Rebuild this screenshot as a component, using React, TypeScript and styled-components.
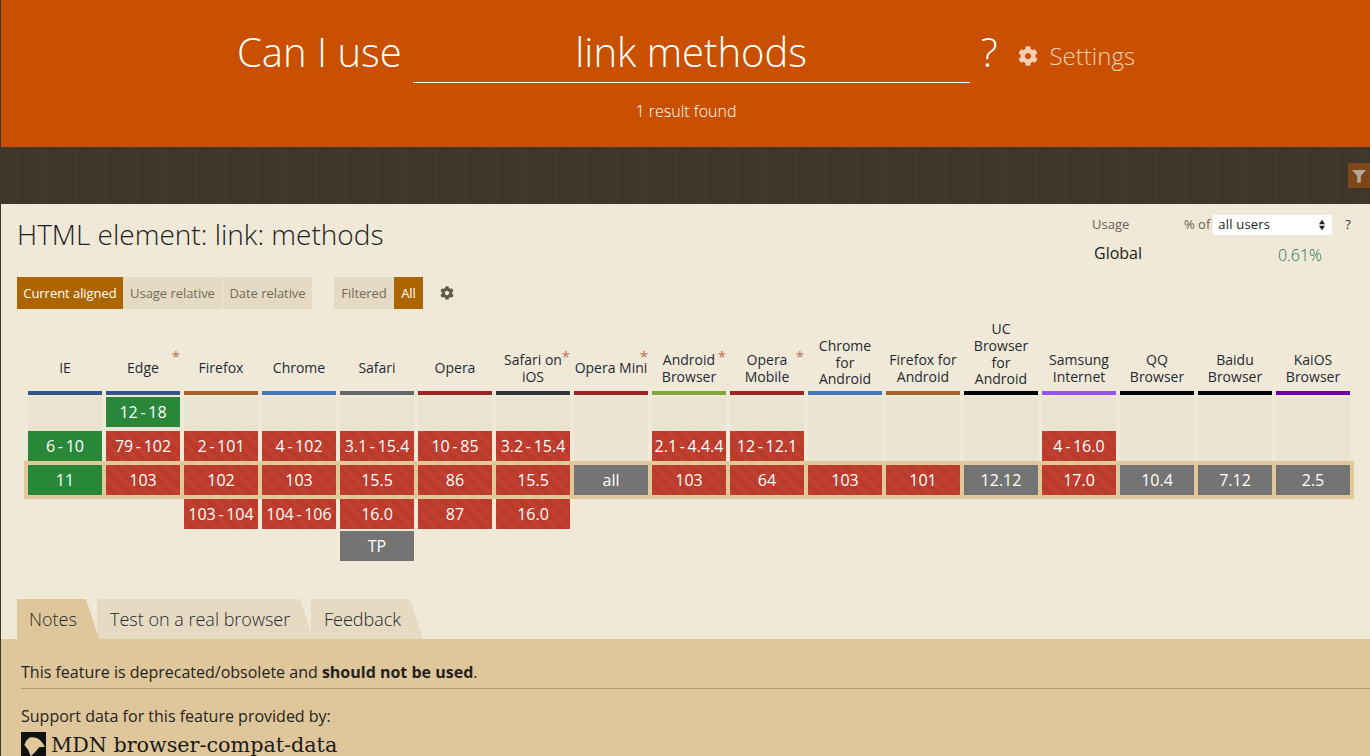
import styled, { createGlobalStyle } from 'styled-components';
import { FaCog } from 'react-icons/fa';

const GlobalStyle = createGlobalStyle`
  html, body {
    margin: 0;
    height: 100%;
    overflow: hidden;
    background: #3f3729;
  }
  body {
    font-family: "Open Sans", "Liberation Sans", sans-serif;
    color: #1f1a12;
  }
`;

const Page = styled.div`
  height: 756px;
  overflow: hidden;
  padding-left: 1px;
  background: #3f3729;
`;

const Header = styled.header`
  height: 147px;
  padding-left: 1px;
  box-sizing: border-box;
  background: #c85000;
  color: #fff;
  display: flex;
  flex-direction: column;
  align-items: center;
`;

const SearchRow = styled.div`
  display: flex;
  align-items: flex-start;
  height: 83px;
  padding-top: 26px;
  box-sizing: border-box;
  font-weight: 300;
  font-size: 40px;
  line-height: 52px;
`;

const SearchLabel = styled.span`
  margin-right: 11px;
`;

const SearchField = styled.div`
  width: 557px;
  height: 56px;
  border-bottom: 1px solid #fff;
  text-align: center;
`;

const Question = styled.span`
  margin-left: 11px;
  margin-right: 21px;
`;

const SettingsLink = styled.span`
  display: flex;
  align-items: center;
  gap: 11px;
  height: 60px;
  font-size: 24px;
  color: #f3cfb4;
`;

const ResultCount = styled.div`
  margin-top: 16px;
  font-size: 16px;
  font-weight: 300;
  line-height: 24px;
`;

const Band = styled.div`
  height: 57px;
  display: flex;
  justify-content: flex-end;
  align-items: flex-start;
  background: repeating-linear-gradient(90deg, #3f3729 0 14px, #41392b 14px 17px, #3e3628 17px 30px);
`;

const FilterButton = styled.div`
  width: 22px;
  height: 25px;
  margin-top: 16px;
  display: flex;
  align-items: center;
  justify-content: center;
  background: #7e4619;
  color: #b0a89c;
`;

const Main = styled.main`
  height: 435px;
  box-sizing: border-box;
  padding: 0 0 0 16px;
  background: #f1e9d8;
  display: flex;
  flex-direction: column;
`;

const TitleRow = styled.div`
  display: flex;
  justify-content: space-between;
  height: 73px;
`;

const Title = styled.h1`
  margin: 10px 0 0;
  font-size: 28px;
  font-weight: 300;
  line-height: 40px;
  color: #1d2227;
`;

const UsagePanel = styled.div`
  width: 265px;
  margin-top: 11px;
  margin-right: 13px;
  font-size: 13px;
`;

const UsageTop = styled.div`
  display: flex;
  align-items: flex-start;
  height: 20px;
  line-height: 18px;
  color: #66604f;
`;

const UsageLabel = styled.span`
  width: 92px;
`;

const OfLabel = styled.span`
  margin-right: 3px;
`;

const UserSelect = styled.div`
  width: 119px;
  height: 20px;
  padding: 0 5px 2px;
  box-sizing: border-box;
  display: flex;
  justify-content: space-between;
  align-items: center;
  background: #fff;
  color: #222;
  letter-spacing: 0.2px;
`;

const Spinner = styled.svg`
  width: 6px;
  height: 12px;
  margin-right: 2px;
  margin-top: 2px;
`;

const UsageHelp = styled.span`
  margin-left: 13px;
  color: #333;
`;

const UsageBottom = styled.div`
  display: flex;
  justify-content: space-between;
  padding: 6px 35px 0 2px;
  font-size: 16px;
  line-height: 24px;
`;

const Percent = styled.span`
  margin-top: 2px;
  font-weight: 300;
  color: #17744a;
`;

const Toolbar = styled.div`
  display: flex;
  align-items: center;
  height: 32px;
  font-size: 13px;
  letter-spacing: -0.05px;
`;

const ToolButton = styled.span<{ $active?: boolean; $width: number }>`
  width: ${(p) => p.$width}px;
  height: 32px;
  line-height: 32px;
  text-align: center;
  background: ${(p) => (p.$active ? '#ad6500' : '#e5dac3')};
  color: ${(p) => (p.$active ? '#fff' : '#736c5c')};
`;

const ToolGap = styled.span<{ $width: number }>`
  width: ${(p) => p.$width}px;
`;

const ToolIcon = styled.span`
  display: flex;
  margin-left: 17px;
  color: #5f5a4f;
`;

const Table = styled.div`
  display: flex;
  gap: 4px;
  margin-left: 11px;
  margin-top: 11px;
`;

const Column = styled.div`
  width: 74px;
  flex: none;
`;

const ColumnHead = styled.div`
  position: relative;
  height: 71px;
  display: flex;
  flex-direction: column;
  justify-content: flex-end;
  text-align: center;
  font-size: 14px;
  line-height: 16.7px;
  color: #1f2a33;
`;

const HeadText = styled.span<{ $lines: number }>`
  min-height: 34px;
  margin: 0 -4px ${(p) => (p.$lines > 2 ? 3 : 5.5)}px;
  display: flex;
  align-items: center;
  justify-content: center;
  white-space: pre-line;
`;

const Star = styled.span`
  position: absolute;
  right: 0;
  top: 31px;
  font-size: 15px;
  line-height: 10px;
  color: #bd6c58;
`;

const ColorBar = styled.div<{ $color: string }>`
  height: 4px;
  margin-bottom: 2px;
  background: ${(p) => p.$color};
`;

const History = styled.div`
  height: 64px;
  display: flex;
  flex-direction: column;
  justify-content: flex-end;
  gap: 4px;
  background: #ebe3d2;
`;

const Cell = styled.div<{ $kind: 'y' | 'n' | 'u' }>`
  height: 30px;
  line-height: 30px;
  text-align: center;
  font-size: 16px;
  color: #fff;
  white-space: nowrap;
  background-color: ${(p) => (p.$kind === 'y' ? '#29873a' : p.$kind === 'u' ? '#747474' : '#c13e2e')};
  ${(p) =>
    p.$kind === 'n' &&
    `background-image: repeating-linear-gradient(45deg, #c13f2e 0 5px, #b83b2c 5px 10px);`}
`;

const CurrentCell = styled(Cell)`
  margin-top: 4px;
  margin-bottom: 4px;
  box-shadow: 0 0 0 4px #e0c89b;
`;

const NextCell = styled(Cell)`
  margin-bottom: 2px;
`;

const Tabs = styled.div`
  display: flex;
  margin-top: auto;
`;

const Tab = styled.span<{ $active?: boolean; $width: number }>`
  position: relative;
  z-index: ${(p) => (p.$active ? 1 : 0)};
  width: ${(p) => p.$width}px;
  height: 40px;
  padding-left: 12px;
  box-sizing: border-box;
  line-height: 40px;
  font-size: 18px;
  font-weight: 300;
  color: #222a30;
  background: ${(p) => (p.$active ? '#dfc69b' : '#e6dac3')};
  clip-path: polygon(0 0, calc(100% - 13px) 0, 100% 100%, 0 100%);
  & + & {
    margin-left: -2px;
    padding-left: 13px;
  }
`;

const Notes = styled.section`
  height: 117px;
  background: #dfc69b;
  padding: 21px 0 0 20px;
  font-size: 16px;
  line-height: 24px;
  color: #1f2420;
`;

const NoteText = styled.p`
  margin: 0;
`;

const Divider = styled.hr`
  margin: 4px 0 15px;
  border: 0;
  border-top: 1px solid #a8977a;
`;

const MdnRow = styled.div`
  display: flex;
  align-items: flex-start;
  gap: 5px;
  margin-top: 5px;
  font-family: "DejaVu Serif", "Liberation Serif", serif;
  font-size: 20.7px;
  line-height: 25px;
  color: #1a1a1a;
`;

const MdnLogo = styled.svg`
  width: 25px;
  height: 25px;
  flex: none;
  margin-top: -1px;
`;

type Kind = 'y' | 'n' | 'u';

type Browser = {
  name: string;
  bar: string;
  star?: boolean;
  history: [string, Kind][];
  current: [string, Kind];
  next?: [string, Kind][];
};

const browsers: Browser[] = [
  { name: 'IE', bar: '#34558b', history: [['6-10', 'y']], current: ['11', 'y'] },
  { name: 'Edge', bar: '#34558b', star: true, history: [['12-18', 'y'], ['79-102', 'n']], current: ['103', 'n'] },
  { name: 'Firefox', bar: '#a6632a', history: [['2-101', 'n']], current: ['102', 'n'], next: [['103-104', 'n']] },
  { name: 'Chrome', bar: '#4477c0', history: [['4-102', 'n']], current: ['103', 'n'], next: [['104-106', 'n']] },
  { name: 'Safari', bar: '#666666', history: [['3.1-15.4', 'n']], current: ['15.5', 'n'], next: [['16.0', 'n'], ['TP', 'u']] },
  { name: 'Opera', bar: '#9b2423', history: [['10-85', 'n']], current: ['86', 'n'], next: [['87', 'n']] },
  { name: 'Safari on\niOS', bar: '#333333', star: true, history: [['3.2-15.4', 'n']], current: ['15.5', 'n'], next: [['16.0', 'n']] },
  { name: 'Opera Mini', bar: '#9b2423', star: true, history: [], current: ['all', 'u'] },
  { name: 'Android\nBrowser', bar: '#7fa53c', star: true, history: [['2.1-4.4.4', 'n']], current: ['103', 'n'] },
  { name: 'Opera\nMobile', bar: '#9b2423', star: true, history: [['12-12.1', 'n']], current: ['64', 'n'] },
  { name: 'Chrome\nfor\nAndroid', bar: '#4477c0', history: [], current: ['103', 'n'] },
  { name: 'Firefox for\nAndroid', bar: '#a6632a', history: [], current: ['101', 'n'] },
  { name: 'UC\nBrowser\nfor\nAndroid', bar: '#000000', history: [], current: ['12.12', 'u'] },
  { name: 'Samsung\nInternet', bar: '#9455f5', history: [['4-16.0', 'n']], current: ['17.0', 'n'] },
  { name: 'QQ\nBrowser', bar: '#000000', history: [], current: ['10.4', 'u'] },
  { name: 'Baidu\nBrowser', bar: '#000000', history: [], current: ['7.12', 'u'] },
  { name: 'KaiOS\nBrowser', bar: '#6a00b0', history: [], current: ['2.5', 'u'] },
];

const versionLabel = (v: string) => v.replace('-', '\u2009-\u2009');

function App() {
  return (
    <Page>
      <GlobalStyle />
      <Header>
        <SearchRow>
          <SearchLabel>Can I use</SearchLabel>
          <SearchField>link methods</SearchField>
          <Question>?</Question>
          <SettingsLink>
            <FaCog size={20} />
            Settings
          </SettingsLink>
        </SearchRow>
        <ResultCount>1 result found</ResultCount>
      </Header>
      <Band>
        <FilterButton>
          <svg width="14" height="14" viewBox="0 0 14 14" fill="currentColor">
            <path d="M0 1h14L8.8 7v6.5H5.2V7z" />
          </svg>
        </FilterButton>
      </Band>
      <Main>
        <TitleRow>
          <Title>HTML element: link: methods</Title>
          <UsagePanel>
            <UsageTop>
              <UsageLabel>Usage</UsageLabel>
              <OfLabel>% of</OfLabel>
              <UserSelect>
                all users
                <Spinner viewBox="0 0 7 12" fill="#222">
                  <path d="M3.5 0L7 5H0zM3.5 12L0 7h7z" />
                </Spinner>
              </UserSelect>
              <UsageHelp>?</UsageHelp>
            </UsageTop>
            <UsageBottom>
              <span>Global</span>
              <Percent>0.61%</Percent>
            </UsageBottom>
          </UsagePanel>
        </TitleRow>
        <Toolbar>
          <ToolButton $active $width={106}>Current aligned</ToolButton>
          <ToolButton $width={99}>Usage relative</ToolButton>
          <ToolGap $width={1} />
          <ToolButton $width={89}>Date relative</ToolButton>
          <ToolGap $width={22} />
          <ToolButton $width={60}>Filtered</ToolButton>
          <ToolButton $active $width={29}>All</ToolButton>
          <ToolIcon>
            <FaCog size={14} />
          </ToolIcon>
        </Toolbar>
        <Table>
          {browsers.map((b) => (
            <Column key={b.name}>
              <ColumnHead>
                <HeadText $lines={b.name.split('\n').length}>{b.name}</HeadText>
                {b.star && <Star>*</Star>}
              </ColumnHead>
              <ColorBar $color={b.bar} />
              <History>
                {b.history.map(([v, k]) => (
                  <Cell key={v} $kind={k}>{versionLabel(v)}</Cell>
                ))}
              </History>
              <CurrentCell $kind={b.current[1]}>{b.current[0]}</CurrentCell>
              {b.next?.map(([v, k]) => (
                <NextCell key={v} $kind={k}>{versionLabel(v)}</NextCell>
              ))}
            </Column>
          ))}
        </Table>
        <Tabs>
          <Tab $active $width={82}>Notes</Tab>
          <Tab $width={216}>Test on a real browser</Tab>
          <Tab $width={112}>Feedback</Tab>
        </Tabs>
      </Main>
      <Notes>
        <NoteText>
          This feature is deprecated/obsolete and <b>should not be used</b>.
        </NoteText>
        <Divider />
        <NoteText>Support data for this feature provided by:</NoteText>
        <MdnRow>
          <MdnLogo viewBox="0 0 25 25">
            <rect width="25" height="25" fill="#111" />
            <path
              d="M9 5.300c2.500-.3 4.800 0 6.700.7 2.700 1.200 5 3.500 6.600 6l1.700 2.700-5.700.6c-1.500 1.500-3 3.200-4.300 5L9.700 24.300 7.300 18 3.300 12.700 5.700 8z"
              fill="#e0c89b"
            />
          </MdnLogo>
          MDN browser-compat-data
        </MdnRow>
      </Notes>
    </Page>
  );
}

export default App;
